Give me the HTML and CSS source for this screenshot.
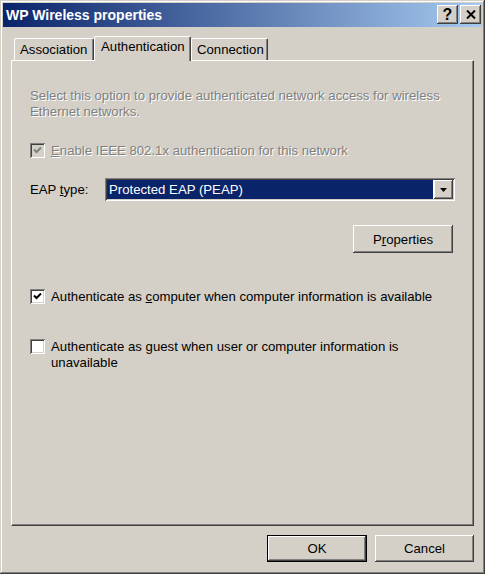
FILE: index.html
```html
<!DOCTYPE html>
<html lang="en">

<head>
    <meta charset="UTF-8" />
    <title>WP Wireless properties</title>
    <link rel="stylesheet" href="styles.css">
</head>

<body>
    <div class="window">
        <div class="titlebar">
            <span class="title">WP Wireless properties</span>
            <div class="caption-btns">
                <div class="cap-btn help">?</div>
                <div class="cap-btn">
                    <svg width="10" height="9" viewBox="0 0 10 9">
                        <path d="M1 0.5 L9 8.5 M9 0.5 L1 8.5" stroke="#000" stroke-width="2" />
                    </svg>
                </div>
            </div>
        </div>

        <div class="body">
            <div class="tabs">
                <div class="tab first">Association</div>
                <div class="tab active">Authentication</div>
                <div class="tab">Connection</div>
            </div>

            <div class="panel">
                <p class="intro disabled">Select this option to provide authenticated network access for wireless Ethernet networks.</p>

                <div class="check-row enable">
                    <span class="checkbox checked disabled-box">
                        <svg width="9" height="9" viewBox="0 0 9 9"><path d="M1 3.5 L3.5 6 L8 1.5" stroke="#808080" stroke-width="2" fill="none" /></svg>
                    </span>
                    <span class="disabled"><u>E</u>nable IEEE 802.1x authentication for this network</span>
                </div>

                <div class="eap-row">
                    <span class="eap-label">EAP <u>t</u>ype:</span>
                    <div class="select">
                        <span class="select-value">Protected EAP (PEAP)</span>
                        <span class="select-arrow">
                            <svg width="7" height="4" viewBox="0 0 7 4"><path d="M0 0 H7 L3.5 4 Z" fill="#000" /></svg>
                        </span>
                    </div>
                </div>

                <div class="props-row">
                    <div class="btn props">P<u>r</u>operties</div>
                </div>

                <div class="check-row computer">
                    <span class="checkbox checked">
                        <svg width="9" height="9" viewBox="0 0 9 9"><path d="M1 3.5 L3.5 6 L8 1.5" stroke="#000" stroke-width="2" fill="none" /></svg>
                    </span>
                    <span>Authenticate as <u>c</u>omputer when computer information is available</span>
                </div>

                <div class="check-row guest">
                    <span class="checkbox"></span>
                    <span>Authenticate as <u>g</u>uest when user or computer information is unavailable</span>
                </div>
            </div>

            <div class="footer">
                <div class="btn default">OK</div>
                <div class="btn">Cancel</div>
            </div>
        </div>
    </div>
</body>

</html>
```

FILE: styles.css
```css
body {
    margin: 0;
    font-family: "Liberation Sans", Arial, sans-serif;
    font-size: 13.2px;
    color: #000000;
    background-color: #d4d0c8;
}

.window {
    width: 485px;
    height: 574px;
    box-sizing: border-box;
    padding: 3px;
    background-color: #d4d0c8;
    box-shadow: inset -1px -1px #404040, inset 1px 1px #d4d0c8, inset -2px -2px #808080, inset 2px 2px #ffffff;
}

.titlebar {
    height: 24px;
    display: flex;
    align-items: flex-start;
    justify-content: space-between;
    background: linear-gradient(to right, #0a246a, #a6caf0);
    padding: 2px 1px 0 3px;
    box-sizing: border-box;
}

.title {
    color: #ffffff;
    font-weight: bold;
    font-size: 14px;
    line-height: 20px;
}

.caption-btns {
    display: flex;
    gap: 2px;
}

.cap-btn {
    width: 21px;
    height: 19px;
    box-sizing: border-box;
    display: flex;
    align-items: center;
    justify-content: center;
    background-color: #d4d0c8;
    box-shadow: inset -1px -1px #404040, inset 1px 1px #ffffff, inset -2px -2px #808080;
    font-weight: bold;
    font-size: 16px;
}

.body {
    padding: 9px 8px 0 8px;
}

.tabs {
    display: flex;
    align-items: flex-start;
    height: 24px;
    position: relative;
    z-index: 1;
}

.tab {
    height: 22px;
    margin-top: 2px;
    box-sizing: border-box;
    padding: 3px 6px 0 6px;
    line-height: 16px;
    border-top: 1px solid #ffffff;
    border-left: 1px solid #ffffff;
    border-top-left-radius: 2px;
    border-top-right-radius: 2px;
    box-shadow: inset -1px 0 #808080;
    border-right: 1px solid #404040;
    background-color: #d4d0c8;
}

.tab.first {
    margin-left: 3px;
    width: 80px;
    padding-left: 5px;
}

.tab.active {
    height: 25px;
    margin-top: 0;
    width: 97px;
    padding-top: 2px;
    padding-left: 6px;
}

.tab + .tab:not(.active) {
    width: 77px;
    padding-left: 5px;
}

.panel {
    height: 466px;
    box-sizing: border-box;
    border-top: 1px solid #ffffff;
    border-left: 1px solid #ffffff;
    border-right: 1px solid #404040;
    border-bottom: 1px solid #404040;
    box-shadow: inset -1px -1px #808080;
    padding: 27px 18px 0 18px;
}

.intro {
    margin: 0;
    line-height: 16px;
}

.disabled {
    color: #808080;
    text-shadow: 1px 1px #ffffff;
}

.check-row {
    display: flex;
    align-items: center;
    gap: 6px;
}

.check-row.enable {
    margin-top: 23px;
}

.check-row.computer {
    margin-top: 36px;
}

.check-row.guest {
    margin-top: 35px;
    align-items: flex-start;
    line-height: 16px;
}

.checkbox {
    flex: none;
    width: 15px;
    height: 15px;
    box-sizing: border-box;
    display: flex;
    align-items: center;
    justify-content: center;
    background-color: #ffffff;
    box-shadow: inset 1px 1px #808080, inset -1px -1px #ffffff, inset 2px 2px #404040, inset -2px -2px #d4d0c8;
}

.checkbox.disabled-box {
    background-color: #d4d0c8;
}

.eap-row {
    display: flex;
    align-items: center;
    margin-top: 20px;
}

.eap-label {
    width: 75px;
}

.select {
    flex: 1;
    height: 23px;
    box-sizing: border-box;
    padding: 2px;
    display: flex;
    gap: 1px;
    background-color: #ffffff;
    box-shadow: inset 1px 1px #808080, inset -1px -1px #ffffff, inset 2px 2px #404040, inset -2px -2px #d4d0c8;
}

.select-value {
    flex: 1;
    background-color: #0a246a;
    color: #ffffff;
    line-height: 19px;
    padding-left: 2px;
}

.select-arrow {
    width: 19px;
    height: 19px;
    box-sizing: border-box;
    display: flex;
    align-items: center;
    justify-content: center;
    background-color: #d4d0c8;
    box-shadow: inset -1px -1px #404040, inset 1px 1px #ffffff, inset -2px -2px #808080;
}

.props-row {
    display: flex;
    justify-content: flex-end;
    margin-top: 24px;
    padding-right: 2px;
}

.btn {
    width: 100px;
    height: 28px;
    box-sizing: border-box;
    display: flex;
    align-items: center;
    justify-content: center;
    background-color: #d4d0c8;
    box-shadow: inset -1px -1px #404040, inset 1px 1px #ffffff, inset -2px -2px #808080;
}

.footer {
    display: flex;
    justify-content: flex-end;
    gap: 8px;
    margin-top: 9px;
}

.footer .btn {
    height: 27px;
}

.footer .btn:last-child {
    width: 99px;
}

.btn.default {
    border: 1px solid #000000;
    box-shadow: inset -1px -1px #404040, inset 1px 1px #ffffff, inset -2px -2px #808080;
}
```
